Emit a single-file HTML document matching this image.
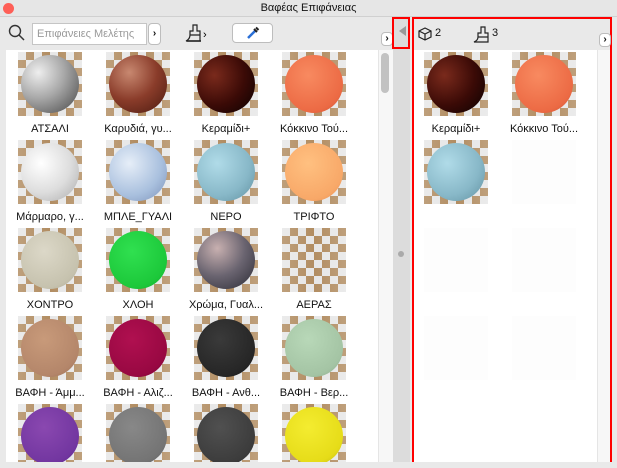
<!DOCTYPE html>
<html><head><meta charset="utf-8"><style>
*{margin:0;padding:0;box-sizing:border-box}
body{width:617px;height:468px;background:#e9e9e9;font-family:"Liberation Sans","DejaVu Sans",sans-serif;position:relative;overflow:hidden;font-size:11px;color:#111}
.abs{position:absolute}
.title{left:0;top:0;width:617px;height:17px;background:#e6e6e6;border-bottom:1px solid #d0d0d0;text-align:center;font-size:11px;line-height:17px}
.close{left:3px;top:3px;width:11px;height:11px;border-radius:50%;background:#fe5f57}
.list{left:6px;top:50px;width:372px;height:412px;background:#fff;overflow:hidden}
.sw{position:absolute;width:64px;height:64px;overflow:hidden;
background:linear-gradient(90deg,rgba(255,255,255,.25),rgba(255,255,255,.1) 50%,rgba(255,255,255,.25)),repeating-conic-gradient(#a98050 0 25%,#e4e4e4 0 50%) 0 0/16px 16px}
.sp{position:absolute;left:3px;top:3px;width:58px;height:58px;border-radius:50%}
.lb{position:absolute;width:88px;text-align:center;font-size:11px;white-space:nowrap}
.btn{background:#fff;border:1px solid #bdbdbd;border-radius:4px}
.right{left:412px;top:17px;width:200px;height:445px;border:2px solid #f00}
.fade{position:absolute;width:64px;height:64px;background:#fdfdfd}
</style></head><body>
<div class="abs title">Βαφέας Επιφάνειας</div>
<div class="abs close"></div>
<svg class="abs" style="left:8px;top:24px" width="18" height="18" viewBox="0 0 18 18"><circle cx="7" cy="7" r="5.5" fill="none" stroke="#333" stroke-width="1.4"/><line x1="11" y1="11" x2="16" y2="16" stroke="#333" stroke-width="1.5"/></svg>
<div class="abs" style="left:32px;top:23px;width:115px;height:22px;background:#fff;border:1px solid #c5c5c5;color:#9a9a9a;font-size:11px;line-height:20px;padding-left:4px;white-space:nowrap;overflow:hidden">Επιφάνειες Μελέτης</div>
<div class="abs btn" style="left:148px;top:23px;width:13px;height:22px;font-size:10px;line-height:20px;text-align:center;font-weight:bold">›</div>
<svg class="abs" style="left:184px;top:23px" width="24" height="20" viewBox="0 0 24 20"><path d="M9 2h4v6h3v4H6V8h3z M6 12c0 3-2 5-4 6h14v-6" fill="none" stroke="#222" stroke-width="1.2"/><path d="M3 18h14" stroke="#222" stroke-width="1.5"/><text x="19" y="15" font-size="11" font-family="Liberation Sans">›</text></svg>
<div class="abs btn" style="left:232px;top:23px;width:41px;height:20px"></div>
<svg class="abs" style="left:245px;top:25px" width="16" height="16" viewBox="0 0 16 16"><path d="M3 13l7-7" stroke="#2a6fd6" stroke-width="2.5"/><path d="M9 4l3 3M11 2.5l2.5 2.5" stroke="#222" stroke-width="2"/></svg>
<div class="abs btn" style="left:381px;top:32px;width:12px;height:14px;font-size:10px;line-height:12px;text-align:center;font-weight:bold">›</div>
<div class="abs" style="left:393px;top:17px;width:17px;height:445px;background:#dcdcdc"></div>
<div class="abs" style="left:392px;top:17px;width:18px;height:32px;border:2px solid #f00"></div>
<div class="abs" style="left:399px;top:26px;width:0;height:0;border-top:5px solid transparent;border-bottom:5px solid transparent;border-right:7px solid #999"></div>
<div class="abs" style="left:398px;top:251px;width:6px;height:6px;border-radius:50%;background:#aaa"></div>
<div class="abs" style="left:378px;top:50px;width:15px;height:412px;background:#f7f7f7;border-left:1px solid #e5e5e5"></div>
<div class="abs" style="left:381px;top:53px;width:8px;height:40px;border-radius:4px;background:#c2c2c2"></div>
<div class="abs list">
<div class="sw" style="left:12px;top:2px"><div class="sp" style="background:radial-gradient(circle at 30% 30%,#eee,#a8a8a8 45%,#454545 100%)"></div></div>
<div class="sw" style="left:100px;top:2px"><div class="sp" style="background:radial-gradient(circle at 35% 30%,#c88870,#8a3c2a 50%,#4a1a10 100%)"></div></div>
<div class="sw" style="left:188px;top:2px"><div class="sp" style="background:radial-gradient(circle at 30% 35%,#7a2a1c,#3a0a06 55%,#0a0202 100%)"></div></div>
<div class="sw" style="left:276px;top:2px"><div class="sp" style="background:radial-gradient(circle at 40% 35%,#f88a60,#ec6a44 70%,#c85030 100%)"></div></div>
<div class="lb" style="left:0;top:73px">ΑΤΣΑΛΙ</div><div class="lb" style="left:88px;top:73px">Καρυδιά, γυ...</div><div class="lb" style="left:176px;top:73px">Κεραμίδι+</div><div class="lb" style="left:264px;top:73px">Κόκκινο Τού...</div>
<div class="sw" style="left:12px;top:90px"><div class="sp" style="background:radial-gradient(circle at 35% 35%,#fff,#ddd 55%,#aaa 100%)"></div></div>
<div class="sw" style="left:100px;top:90px"><div class="sp" style="background:radial-gradient(circle at 35% 35%,#e6eef8,#a9c0de 60%,#7a90b8 100%)"></div></div>
<div class="sw" style="left:188px;top:90px"><div class="sp" style="background:radial-gradient(circle at 35% 35%,#b0dbe8,#88b8c8 60%,#6090a0 100%)"></div></div>
<div class="sw" style="left:276px;top:90px"><div class="sp" style="background:radial-gradient(circle at 40% 35%,#ffc080,#f8a868 70%,#e08850 100%)"></div></div>
<div class="lb" style="left:0;top:161px">Μάρμαρο, γ...</div><div class="lb" style="left:88px;top:161px">ΜΠΛΕ_ΓΥΑΛΙ</div><div class="lb" style="left:176px;top:161px">ΝΕΡΟ</div><div class="lb" style="left:264px;top:161px">ΤΡΙΦΤΟ</div>
<div class="sw" style="left:12px;top:178px"><div class="sp" style="background:radial-gradient(circle at 40% 35%,#dcd8c8,#c6c2ae 70%,#a8a490 100%)"></div></div>
<div class="sw" style="left:100px;top:178px"><div class="sp" style="background:radial-gradient(circle at 40% 35%,#30e050,#1cc83a 70%,#10a028 100%)"></div></div>
<div class="sw" style="left:188px;top:178px"><div class="sp" style="background:radial-gradient(circle at 35% 30%,#c8b0b0,#6a6470 50%,#2a2a34 100%)"></div></div>
<div class="sw" style="left:276px;top:178px"></div>
<div class="lb" style="left:0;top:249px">ΧΟΝΤΡΟ</div><div class="lb" style="left:88px;top:249px">ΧΛΟΗ</div><div class="lb" style="left:176px;top:249px">Χρώμα, Γυαλ...</div><div class="lb" style="left:264px;top:249px">ΑΕΡΑΣ</div>
<div class="sw" style="left:12px;top:266px"><div class="sp" style="background:radial-gradient(circle at 40% 35%,#c89a7a,#b4866a 70%,#946a50 100%)"></div></div>
<div class="sw" style="left:100px;top:266px"><div class="sp" style="background:radial-gradient(circle at 40% 35%,#b01050,#980842 70%,#700030 100%)"></div></div>
<div class="sw" style="left:188px;top:266px"><div class="sp" style="background:radial-gradient(circle at 40% 35%,#3a3a3a,#262626 70%,#111 100%)"></div></div>
<div class="sw" style="left:276px;top:266px"><div class="sp" style="background:radial-gradient(circle at 40% 35%,#b8d8b8,#a4c4a4 70%,#84a484 100%)"></div></div>
<div class="lb" style="left:0;top:337px">ΒΑΦΗ - Άμμ...</div><div class="lb" style="left:88px;top:337px">ΒΑΦΗ - Αλιζ...</div><div class="lb" style="left:176px;top:337px">ΒΑΦΗ - Ανθ...</div><div class="lb" style="left:264px;top:337px">ΒΑΦΗ - Βερ...</div>
<div class="sw" style="left:12px;top:354px"><div class="sp" style="background:radial-gradient(circle at 40% 35%,#8a48b0,#7236a0 70%,#56208a 100%)"></div></div>
<div class="sw" style="left:100px;top:354px"><div class="sp" style="background:radial-gradient(circle at 40% 35%,#888,#747474 70%,#5a5a5a 100%)"></div></div>
<div class="sw" style="left:188px;top:354px"><div class="sp" style="background:radial-gradient(circle at 40% 35%,#505050,#3c3c3c 70%,#282828 100%)"></div></div>
<div class="sw" style="left:276px;top:354px"><div class="sp" style="background:radial-gradient(circle at 40% 35%,#f4ec30,#e6dc18 70%,#b8b010 100%)"></div></div>
</div>
<div class="abs right">
<div class="abs" style="left:0;top:0;width:196px;height:31px;background:#e9e9e9"></div>
<svg class="abs" style="left:3px;top:7px" width="16" height="16" viewBox="0 0 16 16"><path d="M8 2l6 3v6l-6 3-6-3V5zM2 5l6 3 6-3M8 8v6" fill="none" stroke="#222" stroke-width="1.2"/></svg>
<div class="abs" style="left:21px;top:8px;font-size:11px">2</div>
<svg class="abs" style="left:58px;top:6px" width="20" height="18" viewBox="0 0 20 18"><path d="M9 2h4v6h3v4H6V8h3z M6 12c0 3-2 4-4 5h14v-5" fill="none" stroke="#222" stroke-width="1.2"/></svg>
<div class="abs" style="left:78px;top:8px;font-size:11px">3</div>
<div class="abs btn" style="left:185px;top:14px;width:12px;height:14px;font-size:10px;line-height:12px;text-align:center;font-weight:bold">›</div>
<div class="abs" style="left:0;top:31px;width:183px;height:412px;background:#fff"></div>
<div class="abs" style="left:183px;top:31px;width:13px;height:412px;background:#f7f7f7;border-left:1px solid #e5e5e5"></div>
<div class="sw" style="left:10px;top:33px"><div class="sp" style="background:radial-gradient(circle at 30% 35%,#7a2a1c,#3a0a06 55%,#0a0202 100%)"></div></div>
<div class="sw" style="left:98px;top:33px"><div class="sp" style="background:radial-gradient(circle at 40% 35%,#f88a60,#ec6a44 70%,#c85030 100%)"></div></div>
<div class="lb" style="left:-2px;top:104px">Κεραμίδι+</div><div class="lb" style="left:86px;top:104px">Κόκκινο Τού...</div>
<div class="sw" style="left:10px;top:121px"><div class="sp" style="background:radial-gradient(circle at 35% 35%,#b0dbe8,#88b8c8 60%,#6090a0 100%)"></div></div>
<div class="fade" style="left:98px;top:121px"></div>
<div class="fade" style="left:10px;top:209px"></div><div class="fade" style="left:98px;top:209px"></div>
<div class="fade" style="left:10px;top:297px"></div><div class="fade" style="left:98px;top:297px"></div>
</div>
</body></html>
